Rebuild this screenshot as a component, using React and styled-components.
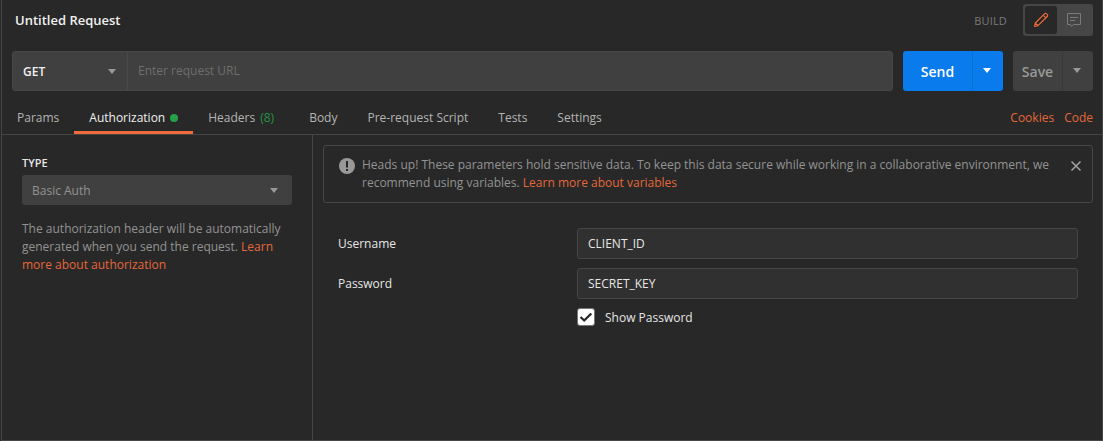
import React from "react";
import styled, { createGlobalStyle } from "styled-components";

const c = {
  bg: "#282828",
  line: "#464646",
  panel: "#404040",
  input: "#303030",
  orange: "#f26b3a",
  link: "#e5673a",
  green: "#26a148",
  blue: "#097bed",
  muted: "#939393",
};

const GlobalStyle = createGlobalStyle`
  * { box-sizing: border-box; }
  body {
    margin: 0;
    background: ${c.bg};
    font-family: "Open Sans", "Noto Sans", sans-serif;
    font-size: 12px;
    line-height: 18px;
    color: #e6e6e6;
  }
  button, input { font: inherit; color: inherit; }
`;

const Frame = styled.div`
  width: 1103px;
  height: 441px;
  padding-left: 1px;
  display: flex;
  overflow: hidden;
  background: ${c.bg};
`;
const Window = styled.div`
  flex: 1;
  display: flex;
  flex-direction: column;
  border: 1px solid ${c.line};
  border-top: 0;
`;
const TitleBar = styled.header`
  height: 40px;
  padding: 0 9px 0 13px;
  display: flex;
  align-items: center;
`;
const Title = styled.h1`
  margin: 0;
  flex: 1;
  font-size: 13px;
  font-weight: 600;
  color: #f0f0f0;
`;
const ModeLabel = styled.span`
  margin-right: 16px;
  padding-top: 2px;
  font-size: 11px;
  letter-spacing: 0.15px;
  color: #7a7a7a;
`;
const Modes = styled.div`
  width: 70px;
  height: 32px;
  padding: 2px;
  display: flex;
  background: ${c.line};
  border-radius: 3px;
`;
const Mode = styled.button`
  width: ${(p) => (p.$active ? 32 : 34)}px;
  height: 28px;
  padding: 0;
  border: 0;
  border-radius: 3px;
  display: flex;
  align-items: center;
  justify-content: center;
  background: ${(p) => (p.$active ? c.bg : "transparent")};
`;
const RequestRow = styled.div`
  margin-top: 11px;
  padding: 0 9px 0 10px;
  height: 40px;
  display: flex;
  gap: 10px;
`;
const UrlBar = styled.div`
  flex: 1;
  display: flex;
  background: ${c.panel};
  border: 1px solid ${c.line};
  border-radius: 3px;
`;
const Method = styled.div`
  width: 115px;
  padding: 2px 11px 0 10px;
  display: flex;
  align-items: center;
  justify-content: space-between;
  font-weight: 600;
  color: #f0f0f0;
  border-right: 1px solid #4a4a4a;
`;
const UrlInput = styled.input`
  flex: 1;
  min-width: 0;
  padding: 0 10px;
  border: 0;
  outline: 0;
  background: transparent;
  &::placeholder { color: #6e6e6e; opacity: 1; }
`;
const Caret = styled.span`
  width: 0;
  height: 0;
  margin-bottom: ${(p) => p.$lift || 0}px;
  border: 4px solid transparent;
  border-top: 5px solid ${(p) => p.$color || "#999"};
  border-bottom: 0;
`;
const SplitButton = styled.div`
  width: ${(p) => p.$width}px;
  display: flex;
  border-radius: 3px;
  background: ${(p) => (p.$primary ? c.blue : c.panel)};
  color: ${(p) => (p.$primary ? "#fff" : "#999")};
  font-size: 14px;
  font-weight: 600;
`;
const SplitMain = styled.button`
  flex: 1;
  padding: 2px 0 0;
  border: 0;
  background: transparent;
`;
const SplitMenu = styled.button`
  width: 31px;
  padding: 0 2px 0 0;
  display: flex;
  align-items: center;
  justify-content: center;
  background: transparent;
  border: 0;
  border-left: 1px solid ${(p) => (p.$primary ? "#086fd6" : "#383838")};
`;
const TabBar = styled.nav`
  height: 44px;
  padding-right: 9px;
  display: flex;
  align-items: stretch;
  border-bottom: 1px solid ${c.line};
`;
const Tab = styled.div`
  padding: 18px 15px 0;
  display: flex;
  gap: 5px;
  color: ${(p) => (p.$active ? "#f0f0f0" : "#b4b4b4")};
  border-bottom: 3px solid ${(p) => (p.$active ? c.orange : "transparent")};
`;
const Dot = styled.span`
  width: 8px;
  height: 8px;
  margin-top: 5px;
  border-radius: 50%;
  background: ${c.green};
`;
const Count = styled.span`
  margin-right: 5px;
  color: #269245;
`;
const TabLinks = styled.div`
  margin-left: auto;
  padding-top: 18px;
  display: flex;
  gap: 10px;
`;
const Link = styled.a`
  color: ${c.link};
`;
const Content = styled.main`
  flex: 1;
  display: flex;
`;
const Sidebar = styled.aside`
  width: 311px;
  padding: 19px 20px 0;
  border-right: 1px solid ${c.line};
`;
const TypeLabel = styled.div`
  font-size: 11px;
  font-weight: 600;
`;
const Select = styled.div`
  width: 270px;
  height: 30px;
  margin: 3px 0 15px;
  padding: 2px 14px 0 10px;
  display: flex;
  align-items: center;
  justify-content: space-between;
  color: ${c.muted};
  background: ${c.panel};
  border-radius: 3px;
`;
const Hint = styled.p`
  margin: 0;
  width: 270px;
  color: ${c.muted};
`;
const Details = styled.section`
  flex: 1;
  padding: 10px 9px 0 10px;
`;
const Notice = styled.div`
  height: 58px;
  padding: 10px 10px 0 15px;
  display: flex;
  border: 1px solid ${c.line};
  border-radius: 3px;
  color: ${c.muted};
`;
const NoticeIcon = styled.svg`
  flex: none;
  margin: 2px 7px 0 0;
`;
const NoticeText = styled.p`
  margin: 0;
  flex: 1;
`;
const CloseIcon = styled.svg`
  flex: none;
  margin-top: 4px;
`;
const Form = styled.div`
  padding: 25px 15px 0 15px;
  display: flex;
  flex-direction: column;
  gap: 9px;
`;
const Field = styled.label`
  display: grid;
  grid-template-columns: 239px 1fr;
  align-items: center;
`;
const TextInput = styled.input`
  height: 31px;
  padding: 0 10px;
  background: ${c.input};
  border: 1px solid ${c.line};
  border-radius: 3px;
  outline: 0;
`;
const CheckRow = styled.label`
  height: 20px;
  padding-left: 239px;
  display: flex;
  align-items: flex-end;
  gap: 10px;
  line-height: 20px;
`;
const Check = styled.span`
  width: 18px;
  height: 18px;
  margin-bottom: 2px;
  display: flex;
  background: #fff;
  border: 1px solid #777;
  border-radius: 3px;
`;

export default function App() {
  return (
    <>
      <GlobalStyle />
      <Frame>
        <Window>
          <TitleBar>
            <Title>Untitled Request</Title>
            <ModeLabel>BUILD</ModeLabel>
            <Modes>
              <Mode $active aria-label="Build">
                <svg width="16" height="16" viewBox="0 0 16 16" fill="none" stroke={c.orange} strokeWidth="1.1" strokeLinejoin="round">
                  <path d="M1.5 14.5 2.3 11 11.5 1.8a1.5 1.5 0 0 1 2.1 0l.6.6a1.5 1.5 0 0 1 0 2.1L5 13.7zM10.2 3.1l2.7 2.7M2.3 11 5 13.7" />
                </svg>
              </Mode>
              <Mode aria-label="Comments">
                <svg width="16" height="16" viewBox="0 0 16 16" fill="none" stroke="#7a7a7a" strokeWidth="1">
                  <path d="M1.5 1.5h13v11h-7L5.5 14.500l-1-2h-3zM4 5.500h8M4 8.500h5" />
                </svg>
              </Mode>
            </Modes>
          </TitleBar>
          <RequestRow>
            <UrlBar>
              <Method>GET<Caret $lift={2} /></Method>
              <UrlInput placeholder="Enter request URL" />
            </UrlBar>
            <SplitButton $primary $width={100}>
              <SplitMain>Send</SplitMain>
              <SplitMenu $primary aria-label="Send options"><Caret $color="#fff" $lift={1} /></SplitMenu>
            </SplitButton>
            <SplitButton $width={80}>
              <SplitMain>Save</SplitMain>
              <SplitMenu aria-label="Save options"><Caret $lift={1} /></SplitMenu>
            </SplitButton>
          </RequestRow>
          <TabBar>
            <Tab>Params</Tab>
            <Tab $active>Authorization<Dot /></Tab>
            <Tab>Headers<Count>(8)</Count></Tab>
            <Tab>Body</Tab>
            <Tab>Pre-request Script</Tab>
            <Tab>Tests</Tab>
            <Tab>Settings</Tab>
            <TabLinks>
              <Link>Cookies</Link>
              <Link>Code</Link>
            </TabLinks>
          </TabBar>
          <Content>
            <Sidebar>
              <TypeLabel>TYPE</TypeLabel>
              <Select>Basic Auth<Caret $lift={1} /></Select>
              <Hint>
                The authorization header will be automatically generated when you send the request. <Link>Learn more about authorization</Link>
              </Hint>
            </Sidebar>
            <Details>
              <Notice>
                <NoticeIcon width="16" height="16" viewBox="0 0 16 16">
                  <circle cx="8" cy="8" r="8" fill="#999" />
                  <path d="M7 3h2v6.500H7zM7 11h2v2H7z" fill={c.bg} />
                </NoticeIcon>
                <NoticeText>
                  Heads up! These parameters hold sensitive data. To keep this data secure while working in a collaborative environment, we recommend using variables. <Link>Learn more about variables</Link>
                </NoticeText>
                <CloseIcon width="12" height="12" viewBox="0 0 12 12" stroke="#a0a0a0" strokeWidth="1.6">
                  <path d="M1.500 1.500l9 9M10.500 1.500l-9 9" />
                </CloseIcon>
              </Notice>
              <Form>
                <Field>Username<TextInput defaultValue="CLIENT_ID" /></Field>
                <Field>Password<TextInput defaultValue="SECRET_KEY" /></Field>
                <CheckRow>
                  <Check>
                    <svg width="16" height="16" viewBox="0 0 16 16" fill="none" stroke="#282828" strokeWidth="2.3">
                      <path d="M2.500 8l3.700 3.500L13.300 4.500" />
                    </svg>
                  </Check>
                  Show Password
                </CheckRow>
              </Form>
            </Details>
          </Content>
        </Window>
      </Frame>
    </>
  );
}
